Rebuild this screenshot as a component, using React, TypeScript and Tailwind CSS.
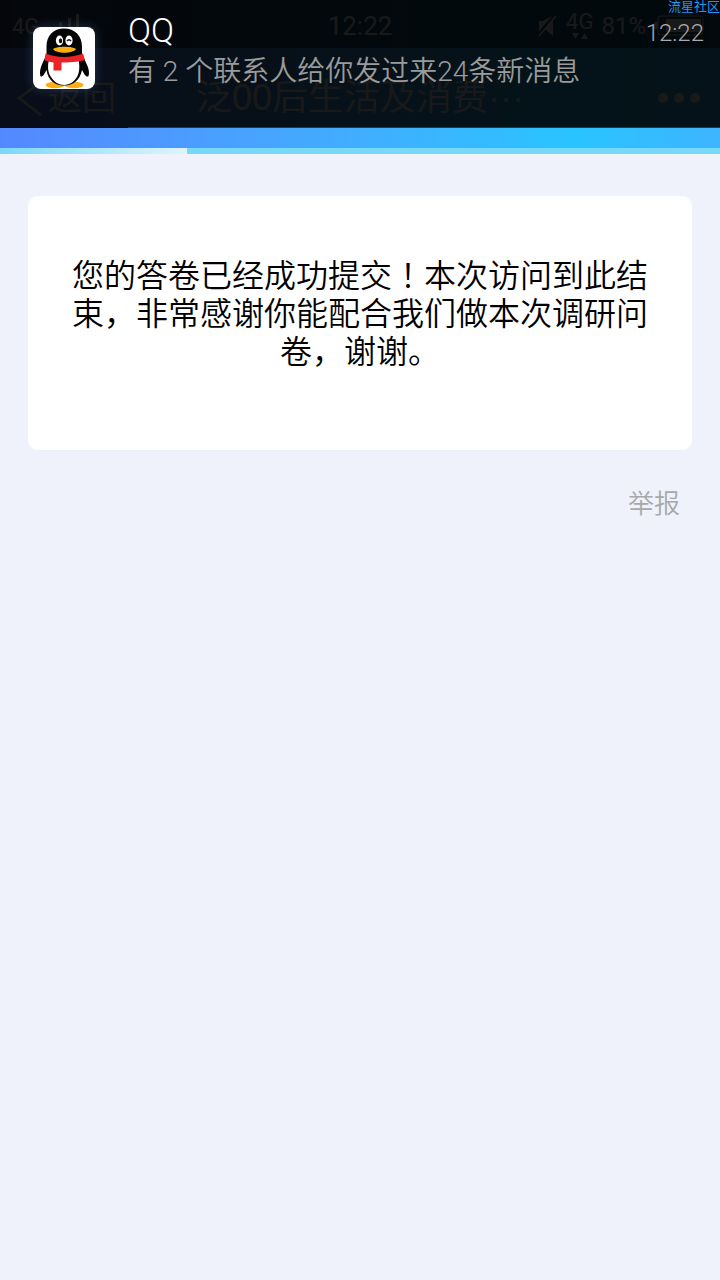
const SIGNAL_BARS = [
  { x: 4, height: 8 },
  { x: 12, height: 14 },
  { x: 21, height: 18 },
  { x: 29, height: 22 },
];

function PenguinLogo() {
  return (
    <svg viewBox="0 0 62 62" className="h-full w-full" aria-hidden="true">
      <ellipse cx="22" cy="58" rx="9.5" ry="3.2" fill="#fcaf14" />
      <ellipse cx="41" cy="58" rx="9.5" ry="3.2" fill="#fcaf14" />
      <path
        d="M31 1.500C20 1.500 13.500 9 13.500 19.500V27C11.500 33 7 39 7 46C7 50.500 8.500 50.500 11 47.500L13.500 43C15 53 21.500 58.500 31 58.500C40.500 58.500 47 53 49 43L51.500 47.500C54 50.500 56 50.500 56 46C56 39 51 33 49 27V19.500C49 9 42 1.500 31 1.500Z"
        fill="#050505"
      />
      <path
        d="M16 33C14.500 38 14.500 45 18 50C21 55 26 58 31 58C37 58 42 54 44.500 49C47 44 46.500 37 45.500 33Z"
        fill="#fff"
      />
      <ellipse cx="26.500" cy="13.500" rx="3.600" ry="5" fill="#fff" />
      <ellipse cx="36" cy="13.500" rx="3.600" ry="5" fill="#fff" />
      <ellipse cx="27.500" cy="13.800" rx="1.700" ry="2.500" fill="#111" />
      <path d="M34 14Q36 11.500 38 14" fill="none" stroke="#111" strokeWidth="1.500" />
      <path d="M20 22C24 19 39 19 43 22C40 27 23 27 20 22Z" fill="#f9ae10" />
      <path
        d="M12.500 26.500C24 31 38 31 50 26.500L52 33C47 34.500 41 35.500 28.500 35.500V43.500H20.500V35.500C16 35 13 34 11.500 33Z"
        fill="#eb2227"
      />
    </svg>
  );
}

function StatusBar() {
  return (
    <div className="relative flex h-12 items-center justify-center bg-black/50 text-white">
      <div className="absolute inset-y-0 left-3 flex items-center gap-2 pt-1">
        <span className="text-[22px]">4G</span>
        <svg width="34" height="24" viewBox="0 0 34 24" aria-hidden="true">
          {SIGNAL_BARS.map((bar) => (
            <rect key={bar.x} x={bar.x} y={22 - bar.height} width="3" height={bar.height} fill="currentColor" />
          ))}
        </svg>
      </div>
      <span className="pt-1 text-[26px]">12:22</span>
      <div className="absolute inset-y-0 right-4 flex items-center gap-2 pt-1">
        <svg width="20" height="22" viewBox="0 0 20 22" aria-hidden="true">
          <path d="M1 6H5L14 1L1 16ZM7 14L15 5V21Z" fill="currentColor" />
          <path d="M1 21L18 1" stroke="currentColor" strokeWidth="1.500" />
        </svg>
        <span className="flex flex-col items-center">
          <span className="text-[22px] leading-5">4G</span>
          <svg width="18" height="8" viewBox="0 0 18 8" aria-hidden="true">
            <path d="M1 1H8L4.500 7ZM10 7H17L13.500 1Z" fill="currentColor" />
          </svg>
        </span>
        <span className="text-2xl">81%</span>
        <svg width="50" height="22" viewBox="0 0 50 22" aria-hidden="true">
          <rect x="4" y="1" width="45" height="19" rx="3" fill="none" stroke="currentColor" strokeWidth="1" />
          <rect x="0" y="7" width="4" height="7" fill="currentColor" />
          <rect x="12" y="4" width="35" height="13" fill="currentColor" />
        </svg>
      </div>
    </div>
  );
}

function NavBar() {
  return (
    <nav className="relative flex h-[100px] items-center justify-center font-['Liberation_Sans','Noto_Sans_CJK_SC',sans-serif] font-[350] text-white">
      <button type="button" aria-label="返回" className="absolute left-4 flex items-center gap-1">
        <svg width="28" height="36" viewBox="0 0 28 36" fill="none" aria-hidden="true">
          <path d="M25 2L3 18L25 35" stroke="currentColor" strokeWidth="2.500" />
        </svg>
        <span className="text-[34px]">返回</span>
      </button>
      <h1 className="text-4xl font-[350]">泛00后生活及消费···</h1>
      <button type="button" aria-label="更多" className="absolute right-5 flex gap-[6px]">
        <span className="size-[10px] rounded-full bg-white" />
        <span className="size-[10px] rounded-full bg-white" />
        <span className="size-[10px] rounded-full bg-white" />
      </button>
    </nav>
  );
}

function Notification() {
  return (
    <div className="absolute inset-x-0 top-0 flex h-32 bg-black/90">
      <div className="flex w-32 shrink-0 justify-center pt-[27px]">
        <div className="size-[62px] overflow-hidden rounded-lg bg-white shadow-[0_0_12px_rgba(120,150,200,0.3)]">
          <PenguinLogo />
        </div>
      </div>
      <div className="flex-1 border-b border-[#333] pt-2 pr-4 font-light">
        <p className="text-[34px] leading-[44px] text-white">QQ</p>
        <p className="text-[28px] leading-10 font-[350] text-[#9b9b9b]">有 2 个联系人给你发过来24条新消息</p>
        <time className="absolute top-[18px] right-4 text-2xl leading-[30px] text-[#aaa]">12:22</time>
      </div>
      <span className="absolute top-0 right-0 text-[13px] leading-[13px] text-[#2196f3]">流星社区</span>
    </div>
  );
}

export default function App() {
  return (
    <div className="min-h-screen bg-[#eff2fb] font-['Roboto','Noto_Sans_CJK_SC',sans-serif]" lang="zh-CN">
      <header className="relative bg-linear-to-r from-[#5488ff] via-[#28c4ff] via-80% to-[#3db4ff]">
        <StatusBar />
        <NavBar />
        <div className="h-[6px] bg-[#78d8f8]">
          <div className="h-full w-[26%] bg-linear-to-r from-[#78d8f8] to-[#def4fd]" />
        </div>
        <Notification />
      </header>

      <main className="px-7 pt-[42px]">
        <section className="rounded-[10px] bg-white px-10 pt-[58px] pb-[82px]">
          <p className="text-center font-['Noto_Sans_CJK_SC',sans-serif] text-[32px] leading-[38px] font-[350] text-black">
            您的答卷已经成功提交<span className="font-['Noto_Sans_CJK_JP',sans-serif]" lang="ja">！</span>
            本次访问到此结束，非常感谢你能配合我们做本次调研问卷，谢谢。
          </p>
        </section>
        <div className="flex justify-end pt-9 pr-3">
          <a href="#report" className="text-[26px] leading-9 font-[350] text-[#a8a8a8]">
            举报
          </a>
        </div>
      </main>
    </div>
  );
}
